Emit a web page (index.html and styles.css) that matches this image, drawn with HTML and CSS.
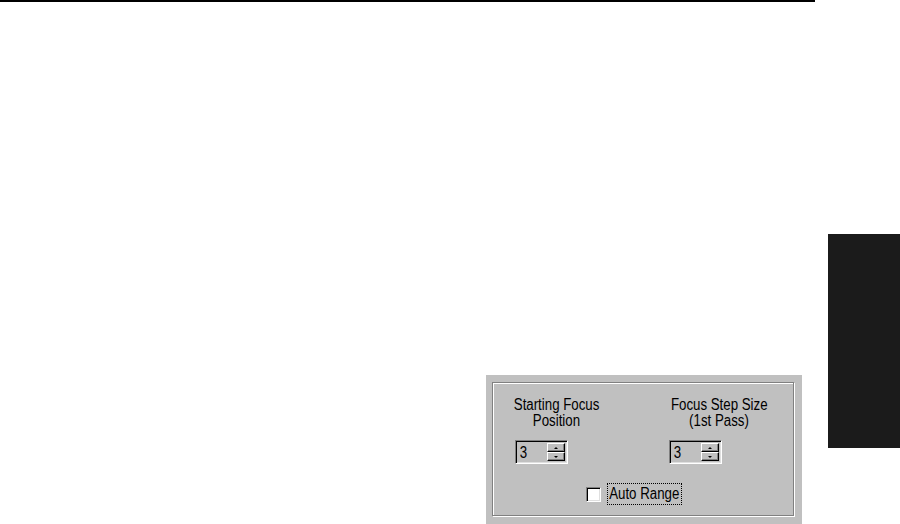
FILE: index.html
```html
<!DOCTYPE html>
<html>
<head>
<meta charset="utf-8">
<link rel="stylesheet" href="styles.css">
</head>
<body>
<div class="page">
  <div class="rule"></div>
  <div class="stage">
    <div class="dialog">
      <div class="groove">
        <div class="cols">
          <div class="col col-a">
            <div class="label">
              <div class="ln"><span class="nar">Starting Focus</span></div>
              <div class="ln"><span class="nar">Position</span></div>
            </div>
            <div class="spin">
              <span class="val"><span class="nar">3</span></span>
              <div class="btns">
                <div class="btn"><span class="arr up"></span></div>
                <div class="btn"><span class="arr down"></span></div>
              </div>
            </div>
          </div>
          <div class="col col-b">
            <div class="label">
              <div class="ln"><span class="nar">Focus Step Size</span></div>
              <div class="ln"><span class="nar">(1st Pass)</span></div>
            </div>
            <div class="spin">
              <span class="val"><span class="nar">3</span></span>
              <div class="btns">
                <div class="btn"><span class="arr up"></span></div>
                <div class="btn"><span class="arr down"></span></div>
              </div>
            </div>
          </div>
        </div>
        <div class="check-row">
          <span class="checkbox"></span>
          <span class="focus"><span class="nar nar-auto">Auto Range</span></span>
        </div>
      </div>
    </div>
    <div class="tab"></div>
  </div>
</div>
</body>
</html>
```

FILE: styles.css
```css
html, body {
  margin: 0;
  padding: 0;
  background: #fff;
}
body {
  width: 900px;
  height: 524px;
  overflow: hidden;
  font-family: "Liberation Sans", Arial, sans-serif;
  font-size: 16px;
  line-height: 16px;
  color: #000;
}
.rule {
  width: 815px;
  height: 2px;
  background: #000;
}
.stage {
  display: grid;
  grid-template-columns: 486px 316px 26px 72px;
  align-items: start;
}
.dialog {
  grid-column: 2;
  margin-top: 373px;
  height: 149px;
  background: #c0c0c0;
  padding: 7px 8px 8px 6px;
  box-sizing: border-box;
}
.tab {
  grid-column: 4;
  margin-top: 232px;
  height: 214px;
  background: #1b1b1b;
}
.groove {
  height: 134px;
  box-sizing: border-box;
  border: 1px solid #808080;
  box-shadow: inset 1px 1px 0 #fff, 1px 1px 0 #fff;
  padding-top: 14px;
}
.cols {
  display: flex;
  gap: 34px;
}
.col-a { width: 127px; }
.col-b { width: 131px; }
.label {
  text-align: center;
  height: 32px;
}
.ln {
  height: 16px;
  line-height: 16px;
  white-space: nowrap;
}
.nar {
  display: inline-block;
  transform: scaleX(0.83);
  white-space: nowrap;
}
.nar-auto {
  margin: 0 -8px;
}
.spin {
  margin-top: 11px;
  width: 53px;
  height: 24px;
  box-sizing: border-box;
  border-top: 1px solid #808080;
  border-left: 1px solid #808080;
  border-right: 1px solid #fff;
  border-bottom: 1px solid #fff;
  box-shadow: inset 1px 1px 0 #000, inset -1px -1px 0 #dfdfdf;
  display: flex;
  align-items: stretch;
  padding: 2px;
}
.col-a .spin { margin-left: 22px; }
.col-b .spin { margin-left: 15px; }
.val {
  flex: 1;
  padding-left: 1px;
  line-height: 20px;
}
.btns {
  width: 18px;
  display: flex;
  flex-direction: column;
}
.btn {
  flex: 1;
  box-sizing: border-box;
  background: #c0c0c0;
  border-top: 1px solid #fff;
  border-left: 1px solid #fff;
  border-right: 1px solid #000;
  border-bottom: 1px solid #000;
  box-shadow: inset -1px -1px 0 #808080;
  display: flex;
  align-items: center;
  justify-content: center;
}
.arr {
  width: 0;
  height: 0;
  border-left: 2px solid transparent;
  border-right: 2px solid transparent;
}
.arr.up { border-bottom: 2px solid #000; }
.arr.down { border-top: 2px solid #000; }
.check-row {
  margin-top: 19px;
  margin-left: 93px;
  display: flex;
  align-items: center;
  gap: 6px;
}
.checkbox {
  width: 15px;
  height: 15px;
  box-sizing: border-box;
  background: #fff;
  border-top: 1px solid #808080;
  border-left: 1px solid #808080;
  border-right: 1px solid #fff;
  border-bottom: 1px solid #fff;
  box-shadow: inset 1px 1px 0 #000, inset -1px -1px 0 #dfdfdf;
}
.focus {
  border: 1px dotted #000;
  padding: 2px;
  line-height: 16px;
}
```
